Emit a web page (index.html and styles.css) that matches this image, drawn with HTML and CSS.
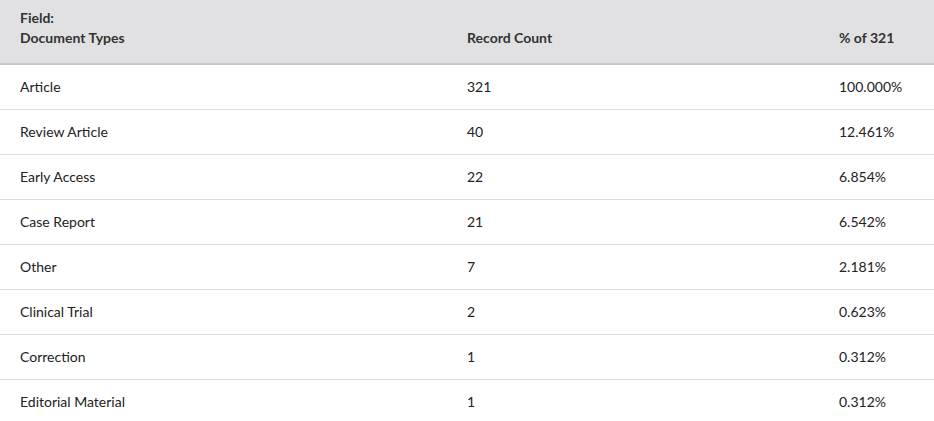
FILE: index.html
```html
<!DOCTYPE html>
<html>
<head>
<meta charset="utf-8">
<link rel="stylesheet" href="styles.css">
</head>
<body>
<div class="table">
  <div class="row head">
    <div class="cell">Field:<br>Document Types</div>
    <div class="cell">Record Count</div>
    <div class="cell">% of 321</div>
  </div>
  <div class="row"><div class="cell">Article</div><div class="cell">321</div><div class="cell">100.000%</div></div>
  <div class="row"><div class="cell">Review Article</div><div class="cell">40</div><div class="cell">12.461%</div></div>
  <div class="row"><div class="cell">Early Access</div><div class="cell">22</div><div class="cell">6.854%</div></div>
  <div class="row"><div class="cell">Case Report</div><div class="cell">21</div><div class="cell">6.542%</div></div>
  <div class="row"><div class="cell">Other</div><div class="cell">7</div><div class="cell">2.181%</div></div>
  <div class="row"><div class="cell">Clinical Trial</div><div class="cell">2</div><div class="cell">0.623%</div></div>
  <div class="row"><div class="cell">Correction</div><div class="cell">1</div><div class="cell">0.312%</div></div>
  <div class="row last"><div class="cell">Editorial Material</div><div class="cell">1</div><div class="cell">0.312%</div></div>
</div>
</body>
</html>
```
FILE: styles.css
```css
html, body {
  margin: 0;
  padding: 0;
  background: #fff;
}
body {
  font-family: Lato, "Liberation Sans", sans-serif;
  font-size: 14px;
  color: #222;
}
.table {
  display: flex;
  flex-direction: column;
}
.row {
  display: grid;
  grid-template-columns: 447px 372px 1fr;
  padding-left: 20px;
  height: 44px;
  align-items: center;
  border-bottom: 1px solid #dedede;
  line-height: 20px;
}
.row.last {
  border-bottom: none;
}
.row.head {
  box-sizing: border-box;
  height: 65px;
  background: #e1e1e4;
  font-weight: bold;
  color: #333;
  border-bottom: 2px solid #c8c8c8;
  align-items: end;
  padding-bottom: 15px;
}
```
